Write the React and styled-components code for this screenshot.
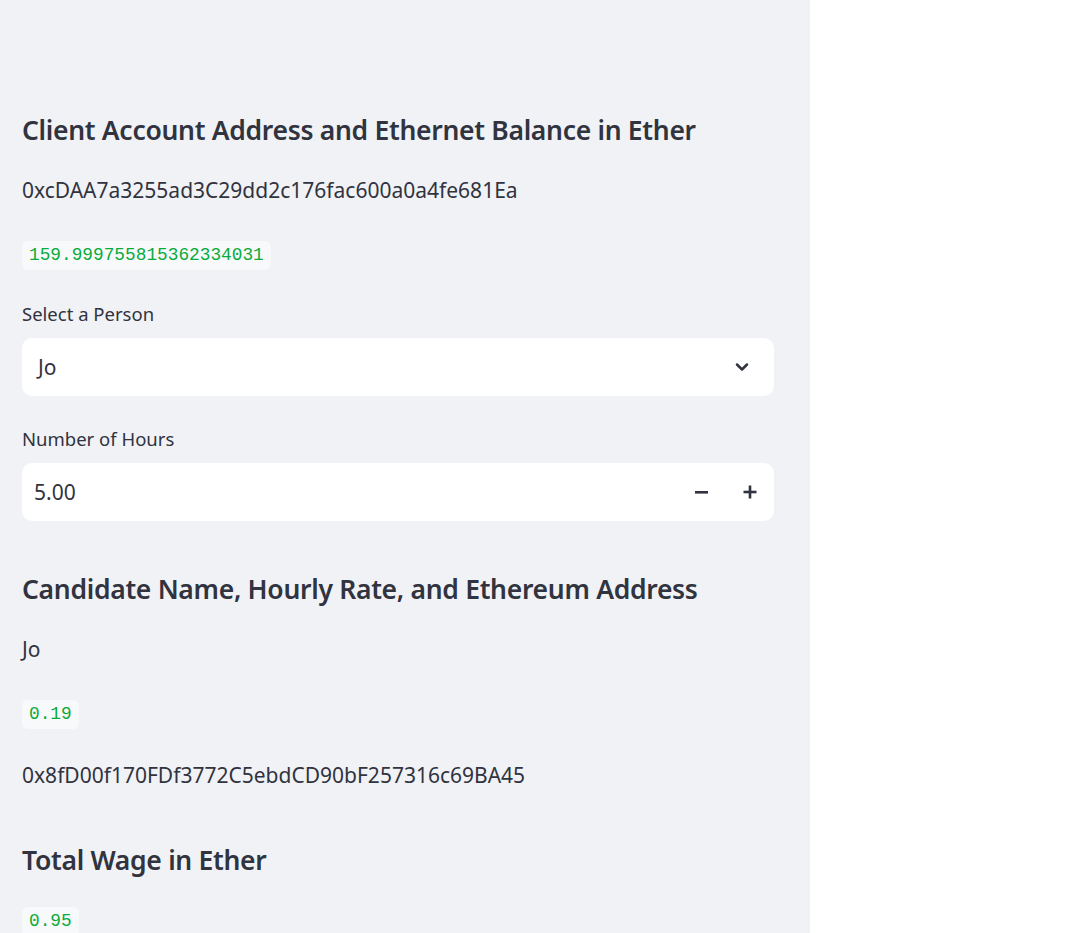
import React from 'react';
import styled, { createGlobalStyle } from 'styled-components';

const GlobalStyle = createGlobalStyle`
  html, body {
    margin: 0;
    padding: 0;
    background: #ffffff;
  }
  body {
    font-family: "Noto Sans", "Open Sans", sans-serif;
    color: #31333f;
  }
`;

const Page = styled.div`
  display: flex;
  width: 1069px;
  height: 933px;
  overflow: hidden;
`;

const Sidebar = styled.aside`
  width: 810px;
  flex-shrink: 0;
  background: #f0f2f6;
  padding: 108px 36px 0 22px;
  box-sizing: border-box;
  display: flex;
  flex-direction: column;
`;

const Heading = styled.h2`
  margin: 0 0 ${p => p.gap ?? 30}px;
  font-size: 26.5px;
  font-weight: 600;
  line-height: 44px;
  letter-spacing: -0.3px;
  color: #31333f;
`;

const Text = styled.p`
  margin: 0 0 ${p => p.gap ?? 30}px;
  font-size: 21px;
  line-height: 32px;
`;

const Code = styled.code`
  align-self: flex-start;
  margin: 0 0 ${p => p.gap ?? 30}px;
  padding: 2px 7px;
  border-radius: 6px;
  background: #f8f9fb;
  color: #09ab3b;
  font-family: "Liberation Mono", "DejaVu Sans Mono", monospace;
  font-size: 17.8px;
  line-height: 25px;
`;

const Label = styled.label`
  display: block;
  margin-bottom: 12px;
  font-size: 18.5px;
  line-height: 24px;
`;

const Field = styled.div`
  margin-bottom: ${p => p.gap ?? 30}px;
`;

const Box = styled.div`
  height: 58px;
  background: #ffffff;
  border-radius: 10px;
  display: flex;
  align-items: center;
  padding: 0 ${p => p.pr ?? 20}px 0 ${p => p.pl ?? 16}px;
  font-size: 21px;
`;

const Value = styled.span`
  flex: 1;
`;

const StepButton = styled.span`
  width: 48px;
  display: flex;
  justify-content: center;
  align-items: center;
`;

function Chevron() {
  return (
    <svg width="20" height="20" viewBox="0 0 24 24" fill="none" stroke="#31333f" strokeWidth="3" strokeLinecap="round" strokeLinejoin="round">
      <path d="M6 9l6 6 6-6" />
    </svg>
  );
}

function Minus() {
  return (
    <svg width="14" height="14" viewBox="0 0 14 14">
      <rect x="0" y="6" width="13" height="2.6" fill="#31333f" />
    </svg>
  );
}

function Plus() {
  return (
    <svg width="14" height="14" viewBox="0 0 14 14">
      <rect x="0.5" y="5.7" width="13" height="2.6" fill="#31333f" />
      <rect x="5.7" y="0.5" width="2.6" height="13" fill="#31333f" />
    </svg>
  );
}

export default function App() {
  return (
    <Page>
      <GlobalStyle />
      <Sidebar>
        <Heading gap={22}>Client Account Address and Ethernet Balance in Ether</Heading>
        <Text gap={35}>0xcDAA7a3255ad3C29dd2c176fac600a0a4fe681Ea</Text>
        <Code gap={32}>159.999755815362334031</Code>
        <Field gap={31}>
          <Label>Select a Person</Label>
          <Box pl={16} pr={22}>
            <Value>Jo</Value>
            <Chevron />
          </Box>
        </Field>
        <Field gap={46}>
          <Label>Number of Hours</Label>
          <Box pl={12} pr={0}>
            <Value>5.00</Value>
            <StepButton><Minus /></StepButton>
            <StepButton><Plus /></StepButton>
          </Box>
        </Field>
        <Heading gap={22}>Candidate Name, Hourly Rate, and Ethereum Address</Heading>
        <Text gap={35}>Jo</Text>
        <Code gap={30}>0.19</Code>
        <Text gap={47}>0x8fD00f170FDf3772C5ebdCD90bF257316c69BA45</Text>
        <Heading gap={25}>Total Wage in Ether</Heading>
        <Code>0.95</Code>
      </Sidebar>
    </Page>
  );
}
